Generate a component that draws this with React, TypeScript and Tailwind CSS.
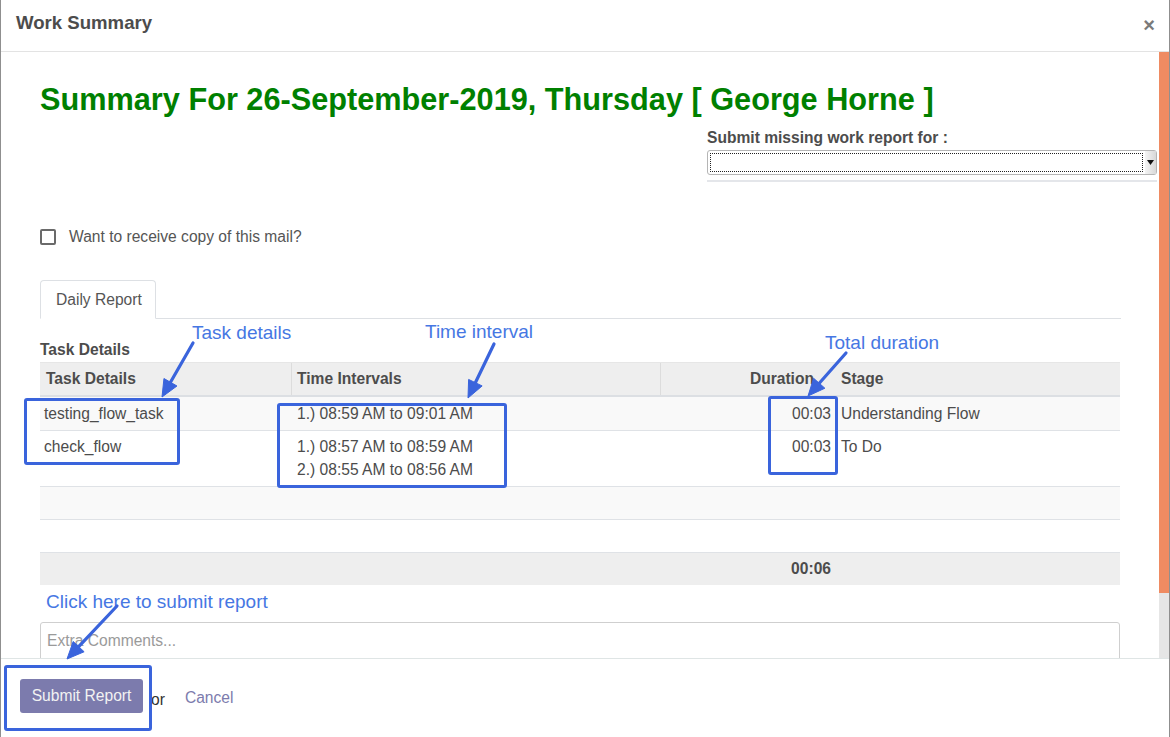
import React from "react";

const BLUE = "#3a64dc";

function Arrow({ x1, y1, x2, y2 }: { x1: number; y1: number; x2: number; y2: number }) {
  const dx = x2 - x1;
  const dy = y2 - y1;
  const len = Math.sqrt(dx * dx + dy * dy);
  const ux = dx / len;
  const uy = dy / len;
  const hl = 17;
  const hw = 7.5;
  const bx = x2 - ux * hl;
  const by = y2 - uy * hl;
  const px = -uy;
  const py = ux;
  const pts = `${x2},${y2} ${bx + px * hw},${by + py * hw} ${bx - px * hw},${by - py * hw}`;
  return (
    <g>
      <line x1={x1} y1={y1} x2={bx + ux * 2} y2={by + uy * 2} stroke={BLUE} strokeWidth={3.2} strokeLinecap="round" />
      <polygon points={pts} fill={BLUE} stroke={BLUE} strokeWidth={1} strokeLinejoin="round" />
    </g>
  );
}

export default function App() {
  const rowText = "text-[15.6px] leading-[23px] text-[#4c4c4c]";
  return (
    <div className="relative w-[1170px] h-[737px] overflow-hidden bg-white font-['Liberation_Sans',Arial,sans-serif]">
      <div className="w-full h-full flex flex-col border-x border-[#8f8f8f]">
        {/* Header */}
        <div className="h-[52px] shrink-0 border-b border-[#e3e3e3] flex items-center justify-between pl-[15px] pr-[14px]">
          <div className="text-[18.6px] font-bold text-[#4c4c4c] pb-[5px]">Work Summary</div>
          <div className="text-[20px] font-bold text-[#7a7a7a] leading-none pb-[2px]">×</div>
        </div>

        {/* Body */}
        <div className="h-[606px] shrink-0 flex">
          <div className="flex-1 overflow-hidden pl-[39px] pr-[38px] pt-[30px]">
            <div className="text-[30.7px] leading-[36px] font-bold text-[#008000] whitespace-nowrap">
              Summary For 26-September-2019, Thursday [ George Horne ]
            </div>
            <div className="flex justify-end">
              <div className="w-[450px] mr-[-36px] mt-[11px]">
                <div className="text-[15.6px] leading-[18px] font-bold text-[#4c4c4c]">Submit missing work report for :</div>
                <div className="mt-[3px] h-[25px] flex border border-[#b5b5b5] rounded-[3px] bg-white">
                  <div className="flex-1 m-[2px] border border-dotted border-[#222]"></div>
                  <div className="w-[11px] flex items-center justify-center bg-gradient-to-r from-[#f4f4f4] to-[#d8d8d8]">
                    <svg width="7" height="5" viewBox="0 0 7 5">
                      <polygon points="0,0 7,0 3.5,5" fill="#111" />
                    </svg>
                  </div>
                </div>
                <div className="mt-[5px] border-b-2 border-[#e4e6ea]"></div>
              </div>
            </div>

            {/* Checkbox */}
            <div className="mt-[47px] flex items-center h-[16px]">
              <div className="w-[16px] h-[16px] border-2 border-[#6a6a6a] rounded-[2px] bg-white"></div>
              <div className="ml-[13px] text-[15.6px] text-[#555]">Want to receive copy of this mail?</div>
            </div>

            {/* Tabs */}
            <div className="mt-[35px] flex border-b border-[#dde0e4]">
              <div className="w-[116px] h-[39px] -mb-px border border-[#dde0e4] border-b-white rounded-t-[4px] bg-white flex items-center pl-[15px] text-[15.6px] text-[#555]">
                Daily Report
              </div>
            </div>

            <div className="mt-[22px] text-[15.6px] leading-[18px] font-bold text-[#4c4c4c]">Task Details</div>

            {/* Table */}
            <div className="mt-[3px] w-[1080px]">
              <div className="h-[35px] flex bg-[#eeeeee] border-t border-[#e6e6e6] border-b-2 border-b-[#dcdfe3] text-[15.6px] font-bold text-[#4c4c4c]">
                <div className="w-[252px] pl-[6px] flex items-center border-r border-[#dcdcdc]">Task Details</div>
                <div className="w-[369px] pl-[5px] flex items-center border-r border-[#dcdcdc]">Time Intervals</div>
                <div className="w-[175px] pr-[22px] flex items-center justify-end">Duration</div>
                <div className="flex-1 pl-[5px] flex items-center">Stage</div>
              </div>
              <div className={`h-[34px] flex bg-[#f9f9f9] border-b border-[#dfe2e6] pt-[5px] ${rowText}`}>
                <div className="w-[252px] pl-[4px]">testing_flow_task</div>
                <div className="w-[369px] pl-[5px]">1.) 08:59 AM to 09:01 AM</div>
                <div className="w-[175px] pr-[5px] text-right">00:03</div>
                <div className="flex-1 pl-[5px]">Understanding Flow</div>
              </div>
              <div className={`h-[56px] flex bg-white border-b border-[#dfe2e6] pt-[4px] ${rowText}`}>
                <div className="w-[252px] pl-[4px]">check_flow</div>
                <div className="w-[369px] pl-[5px] flex flex-col">
                  <span>1.) 08:57 AM to 08:59 AM</span>
                  <span>2.) 08:55 AM to 08:56 AM</span>
                </div>
                <div className="w-[175px] pr-[5px] text-right">00:03</div>
                <div className="flex-1 pl-[5px]">To Do</div>
              </div>
              <div className="h-[33px] bg-[#f9f9f9] border-b border-[#dfe2e6]"></div>
              <div className="h-[33px] bg-white border-b border-[#dfe2e6]"></div>
              <div className="h-[32px] flex bg-[#eeeeee] text-[15.6px] font-bold text-[#4c4c4c]">
                <div className="w-[252px]"></div>
                <div className="w-[369px]"></div>
                <div className="w-[175px] pr-[5px] flex items-center justify-end">00:06</div>
                <div className="flex-1"></div>
              </div>
            </div>

            {/* Textarea */}
            <div className="mt-[37px] w-[1080px] h-[60px] border border-[#cfcfcf] rounded-[3px] pl-[6px] pt-[6px] text-[15.6px] text-[#9a9a9a]">
              Extra Comments...
            </div>
          </div>
          {/* Scrollbar */}
          <div className="w-[10px] shrink-0 flex flex-col">
            <div className="h-[541px] bg-[#ef8b62]"></div>
            <div className="flex-1 bg-[#e6e6e6]"></div>
          </div>
        </div>

        {/* Footer */}
        <div className="flex-1 border-t border-[#dfe5e5] pl-[19px] pt-[20px] flex items-start">
          <div className="w-[123px] h-[34px] rounded-[3px] bg-[#7c7bad] flex items-center justify-center text-[15.6px] text-[#f2f2f2]">
            Submit Report
          </div>
          <div className="ml-[8px] mt-[9px] text-[15.6px] text-[#333]">or</div>
          <div className="ml-[20px] mt-[7px] text-[15.6px] text-[#7c7bad]">Cancel</div>
        </div>
      </div>

      {/* Annotation overlay */}
      <div className="absolute left-[24px] top-[398px] w-[156px] h-[67px] border-[3px] border-[#3a64dc] rounded-[3px]"></div>
      <div className="absolute left-[277px] top-[403px] w-[230px] h-[85px] border-[3px] border-[#3a64dc] rounded-[3px]"></div>
      <div className="absolute left-[768px] top-[396px] w-[70px] h-[79px] border-[3px] border-[#3a64dc] rounded-[3px]"></div>
      <div className="absolute left-[4px] top-[665px] w-[148px] h-[66px] border-[3px] border-[#3a64dc] rounded-[3px]"></div>

      <div className="absolute left-[192px] top-[323px] text-[19px] leading-[19px] text-[#4677e3] whitespace-nowrap">Task details</div>
      <div className="absolute left-[425px] top-[322px] text-[19px] leading-[19px] text-[#4677e3] whitespace-nowrap">Time interval</div>
      <div className="absolute left-[825px] top-[333px] text-[19px] leading-[19px] text-[#4677e3] whitespace-nowrap">Total duration</div>
      <div className="absolute left-[46px] top-[592px] text-[19px] leading-[19px] text-[#4677e3] whitespace-nowrap">Click here to submit report</div>

      <svg className="absolute inset-0 pointer-events-none" width="1170" height="737">
        <Arrow x1={193} y1={343} x2={162} y2={397} />
        <Arrow x1={494} y1={344} x2={468} y2={398} />
        <Arrow x1={846} y1={353} x2={808} y2={396} />
        <Arrow x1={117} y1={606} x2={67} y2={659} />
      </svg>
    </div>
  );
}
